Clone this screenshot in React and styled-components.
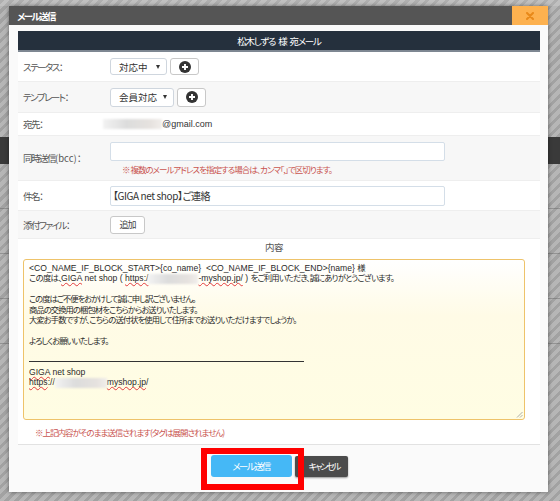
import React from 'react';
import styled, { createGlobalStyle } from 'styled-components';

const GlobalStyle = createGlobalStyle`
  html, body { margin: 0; padding: 0; }
  body {
    width: 560px;
    height: 501px;
    overflow: hidden;
    font-family: "Noto Sans CJK JP", "Noto Sans", sans-serif;
    font-feature-settings: "palt";
    background: repeating-linear-gradient(135deg, #a2a2a2 0 3px, #b6b6b6 3px 7px);
  }
`;

/* page behind the dialog */
const Page = styled.div`
  position: relative;
  width: 560px;
  height: 501px;
  display: flex;
  flex-direction: column;
`;

const PageTop = styled.div`
  height: 6px;
  background: rgba(255, 255, 255, 0.15);
`;

const PageSpacer = styled.div`
  height: ${p => p.h}px;
`;

const PageBand = styled.div`
  height: 27px;
  background: #3a3a3a;
`;

const PageRow = styled.div`
  height: 44px;
  border-bottom: 1px solid rgba(80, 80, 80, 0.35);
`;

/* dialog */
const Modal = styled.div`
  position: absolute;
  top: 6px;
  left: 9px;
  width: 539px;
  height: 486px;
  background: #fafafa;
  box-shadow: 0 0 4px rgba(0, 0, 0, 0.45);
  display: flex;
  flex-direction: column;
`;

const TitleBar = styled.div`
  height: 19px;
  background: #555555;
  display: flex;
  align-items: center;
  justify-content: space-between;
`;

const Title = styled.div`
  color: #fff;
  font-size: 9.5px;
  font-weight: 700;
  padding-left: 8px;
  letter-spacing: -1.6px;
`;

const CloseButton = styled.div`
  width: 36px;
  height: 19px;
  background: #fdb14f;
  display: flex;
  align-items: center;
  justify-content: center;
`;

const Body = styled.div`
  padding: 6px 8px 0 9px;
`;

const Panel = styled.div`
  background: #fff;
  border-bottom: 1px solid #e2e2e2;
`;

const PanelHead = styled.div`
  height: 19px;
  background: #25303d;
  border-bottom: 2px solid #7e8792;
  color: #fff;
  font-size: 9.5px;
  display: flex;
  align-items: center;
  justify-content: center;
  letter-spacing: -1.2px;
  word-spacing: 2px;
`;

const Row = styled.div`
  display: grid;
  grid-template-columns: 92px 1fr;
  height: ${p => p.h}px;
  box-sizing: border-box;
  background: ${p => (p.shade ? '#f7f7f7' : '#fff')};
  border-bottom: 1px solid #eeeeee;
`;

const Label = styled.div`
  font-size: 9.5px;
  color: #555;
  padding-left: 5px;
  align-self: center;
  letter-spacing: -1.5px;
`;

const Latin = styled.span`
  letter-spacing: 0;
`;

const Field = styled.div`
  display: flex;
  align-items: ${p => (p.column ? 'flex-start' : 'center')};
  flex-direction: ${p => (p.column ? 'column' : 'row')};
  gap: ${p => (p.column ? 0 : 3)}px;
  padding-top: ${p => (p.column ? 6 : 0)}px;
`;

const Select = styled.div`
  width: ${p => p.w}px;
  height: ${p => p.h}px;
  box-sizing: border-box;
  border: 1px solid #cfd6de;
  border-radius: 3px;
  background: #fff;
  display: flex;
  align-items: center;
  justify-content: space-between;
  padding: 0 6px 0 8px;
  font-size: 9.5px;
  color: #333;
`;

const Caret = styled.span`
  width: 0;
  height: 0;
  border-left: 2.5px solid transparent;
  border-right: 2.5px solid transparent;
  border-top: 4px solid #333;
`;

const IconButton = styled.div`
  width: 29px;
  height: ${p => p.h}px;
  box-sizing: border-box;
  border: 1px solid #c8c8c8;
  border-radius: 3px;
  background: #fff;
  display: flex;
  align-items: center;
  justify-content: center;
`;

const Address = styled.div`
  display: flex;
  align-items: center;
  font-size: 9px;
  color: #333;
  font-family: "Liberation Sans", "Noto Sans CJK JP", sans-serif;
`;

const Masked = styled.span`
  display: inline-block;
  width: ${p => p.w}px;
  height: 10px;
  margin-left: ${p => p.ml || 0}px;
  background: linear-gradient(90deg, #f3f3f3, #dcdcdc 40%, #e6e2df 80%, #f1eeeb);
  filter: blur(1px);
  vertical-align: middle;
`;

const TextInput = styled.div`
  width: 335px;
  height: ${p => p.h}px;
  box-sizing: border-box;
  border: 1px solid #d4dee8;
  border-radius: 2px;
  background: #fff;
  display: flex;
  align-items: center;
  padding-left: 2px;
  font-size: 10px;
  color: #333;
  letter-spacing: -0.4px;
`;

const Note = styled.div`
  color: #c9544f;
  font-size: 8.5px;
  margin: ${p => p.m || '0'};
  letter-spacing: -1px;
`;

const SmallButton = styled.div`
  width: 35px;
  height: 18px;
  box-sizing: border-box;
  border: 1px solid #c8c8c8;
  border-radius: 3px;
  background: #fff;
  display: flex;
  align-items: center;
  justify-content: center;
  font-size: 9px;
  color: #444;
  letter-spacing: -1px;
`;

const ContentSection = styled.div`
  padding: 2px 15px 6px 5px;
  display: flex;
  flex-direction: column;
`;

const SectionTitle = styled.div`
  text-align: center;
  font-size: 9.5px;
  line-height: 13px;
  color: #555;
  letter-spacing: -0.5px;
`;

const TextArea = styled.div`
  position: relative;
  margin-top: 5px;
  height: 161px;
  box-sizing: border-box;
  border: 1px solid #eec36a;
  border-radius: 3px;
  background: linear-gradient(180deg, #ffffff 0%, #fffbe6 35%, #fffde3 100%);
  padding: 3px 5px;
  font-family: "Liberation Sans", "Noto Sans CJK JP", sans-serif;
  font-size: 8.6px;
  line-height: 10.4px;
  color: #2a2a2a;
  white-space: pre;
`;

const Line = styled.div`
  height: 10.4px;
`;

/* Japanese run; when a width is given it is spread to that width */
const Jp = styled.span`
  font-size: 8.3px;
  letter-spacing: -1.4px;
  ${p => p.w && `
    display: inline-block;
    width: ${p.w}px;
    white-space: normal;
    text-align: justify;
    text-align-last: justify;
    text-justify: inter-character;
  `}
`;

const Squiggle = styled.span`
  text-decoration: underline wavy #e23b3b;
  text-decoration-thickness: 1px;
  text-underline-offset: 1px;
`;

const Rule = styled.div`
  width: 275px;
  height: 10.4px;
  display: flex;
  align-items: center;
  &::before {
    content: '';
    flex: 1;
    border-top: 1px solid #333;
  }
`;

const Grip = styled.svg`
  position: absolute;
  right: 1px;
  bottom: 1px;
`;

const Footer = styled.div`
  display: flex;
  justify-content: center;
  gap: 3px;
  padding-top: 10px;
`;

const SendWrap = styled.div`
  position: relative;
`;

const SendButton = styled.div`
  width: 81px;
  height: 22px;
  border-radius: 3px;
  background: #45b8f6;
  color: #fff;
  font-size: 9.5px;
  letter-spacing: -1.6px;
  display: flex;
  align-items: center;
  justify-content: center;
`;

const Highlight = styled.div`
  position: absolute;
  top: -7px;
  left: -10px;
  right: -12px;
  bottom: -13px;
  border: 6px solid #ff0000;
  z-index: 2;
  pointer-events: none;
`;

const CancelButton = styled.div`
  width: 53px;
  height: 21px;
  margin-top: 1px;
  box-sizing: border-box;
  padding-left: 6px;
  border-radius: 2px;
  background: #4b4b4b;
  color: #fff;
  font-size: 9px;
  letter-spacing: -2px;
  display: flex;
  align-items: center;
  justify-content: center;
  box-shadow: 0 1px 2px rgba(0, 0, 0, 0.4);
`;

const PlusIcon = () => (
  <svg width="12" height="12" viewBox="0 0 12 12">
    <circle cx="6" cy="6" r="6" fill="#333" />
    <path d="M6 3v6M3 6h6" stroke="#fff" strokeWidth="1.9" />
  </svg>
);

const CloseIcon = () => (
  <svg width="8" height="8" viewBox="0 0 8 8">
    <path d="M1 1l6 6M7 1l-6 6" stroke="#e8891a" strokeWidth="2" strokeLinecap="round" />
  </svg>
);

export default function App() {
  return (
    <>
      <GlobalStyle />
      <Page lang="ja">
        <PageTop />
        <PageSpacer h={131} />
        <PageBand />
        <PageRow />
        <PageRow />
        <PageRow />
        <PageRow />

        <Modal>
          <TitleBar>
            <Title>メール送信</Title>
            <CloseButton><CloseIcon /></CloseButton>
          </TitleBar>
          <Body>
            <Panel>
              <PanelHead>松木しずる 様 宛メール</PanelHead>

              <Row h={30}>
                <Label>ステータス：</Label>
                <Field>
                  <Select w={57} h={17}>対応中<Caret /></Select>
                  <IconButton h={17}><PlusIcon /></IconButton>
                </Field>
              </Row>

              <Row h={31} shade>
                <Label>テンプレート：</Label>
                <Field>
                  <Select w={64} h={19}>会員対応<Caret /></Select>
                  <IconButton h={19}><PlusIcon /></IconButton>
                </Field>
              </Row>

              <Row h={23}>
                <Label>宛先：</Label>
                <Address><Masked w={59} ml={-7} />@gmail.com</Address>
              </Row>

              <Row h={45} shade>
                <Label>同時送信<Latin>(bcc)</Latin>：</Label>
                <Field column>
                  <TextInput h={19} />
                  <Note m="2px 0 0 12px">※ 複数のメールアドレスを指定する場合は、カンマ「,」で区切ります。</Note>
                </Field>
              </Row>

              <Row h={30}>
                <Label>件名：</Label>
                <Field>
                  <TextInput h={20}>【GIGA net shop】ご連絡</TextInput>
                </Field>
              </Row>

              <Row h={28} shade>
                <Label>添付ファイル：</Label>
                <Field>
                  <SmallButton>追加</SmallButton>
                </Field>
              </Row>

              <ContentSection>
                <SectionTitle>内容</SectionTitle>
                <TextArea>
                  <Line>{'<CO_NAME_IF_BLOCK_START>{co_name}  <CO_NAME_IF_BLOCK_END>{name} '}<Jp>様</Jp></Line>
                  <Line>
                    <Jp w={32}>この度は、</Jp><Squiggle>GIGA</Squiggle>{' net shop ( '}<Squiggle>https:/</Squiggle>
                    <Masked w={50} />
                    <Squiggle>-myshop.jp/</Squiggle>{' ) '}
                    <Jp w={143}>をご利用いただき、誠にありがとうございます。</Jp>
                  </Line>
                  <Line />
                  <Line><Jp w={166}>この度はご不便をおかけして誠に申し訳ございません。</Jp></Line>
                  <Line><Jp w={168}>商品の交換用の梱包材をこちらからお送りいたします。</Jp></Line>
                  <Line><Jp w={267}>大変お手数ですが、こちらの送付状を使用して住所までお送りいただけますでしょうか。</Jp></Line>
                  <Line />
                  <Line><Jp w={79}>よろしくお願いいたします。</Jp></Line>
                  <Line />
                  <Rule />
                  <Line><Squiggle>GIGA</Squiggle> net shop</Line>
                  <Line>
                    <Squiggle>https</Squiggle>://<Masked w={52} /><Squiggle>myshop.jp</Squiggle>/
                  </Line>
                  <Grip width="7" height="7" viewBox="0 0 7 7">
                    <path d="M6.5 1L1 6.5M6.5 4L4 6.5" stroke="#999" strokeWidth="0.8" />
                  </Grip>
                </TextArea>
                <Note m="6px 0 0 12px">※上記内容がそのまま送信されます(タグは展開されません)</Note>
              </ContentSection>
            </Panel>

            <Footer>
              <SendWrap>
                <SendButton>メール送信</SendButton>
                <Highlight />
              </SendWrap>
              <CancelButton>キャンセル</CancelButton>
            </Footer>
          </Body>
        </Modal>
      </Page>
    </>
  );
}
